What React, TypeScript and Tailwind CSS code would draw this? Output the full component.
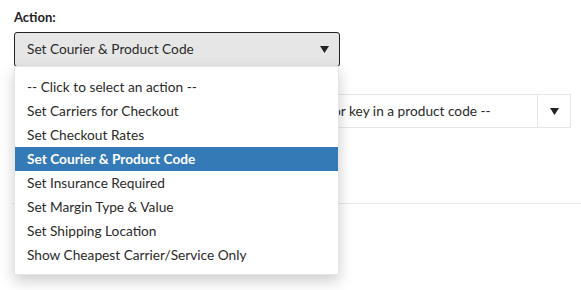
const actions = [
  '-- Click to select an action --',
  'Set Carriers for Checkout',
  'Set Checkout Rates',
  'Set Courier & Product Code',
  'Set Insurance Required',
  'Set Margin Type & Value',
  'Set Shipping Location',
  'Show Cheapest Carrier/Service Only',
]

function Caret() {
  return (
    <svg width="9" height="7" viewBox="0 0 9 7" className="fill-[#222]">
      <path d="M0 0h9L4.5 7z" />
    </svg>
  )
}

export default function App() {
  const selected = 'Set Courier & Product Code'

  return (
    <div className="relative min-h-[290px] bg-white text-[13.7px] text-[#2a2a2a] font-['Lato','Liberation_Sans',sans-serif]">
      <div className="pl-[14px] pt-[9px]">
        {/* Action */}
        <label className="block text-[13px] font-bold text-[#222] leading-[16px]">Action:</label>
        <div className="mt-[7px] w-[326px] h-[35px] rounded-[3px] border border-[#222] bg-[#e6e6e6] flex items-center justify-between pl-[12px] pr-[10px]">
          <span>{selected}</span>
          <Caret />
        </div>

        {/* Value */}
        <label className="block mt-[5px] text-[13px] font-bold text-[#222] leading-[16px]">Value:</label>
        <div className="mt-[6px] w-[557px] h-[34px] border border-[#e5e7eb] flex items-stretch">
          <div className="flex-1 flex items-center pl-[12px] whitespace-nowrap overflow-hidden">
            -- Select a carrier &amp; service from the dropdown list or key in a product code --
          </div>
          <div className="w-[33px] border-l border-[#e5e7eb] flex items-center justify-center">
            <Caret />
          </div>
        </div>

        <button className="mt-[31px] h-[30px] w-[90px] rounded-[3px] bg-[#f0a30a] text-white font-bold">
          Save
        </button>
      </div>
      <div className="mt-[14px] ml-[12px] border-t border-[#e8e8e8]" />

      {/* Open dropdown menu */}
      <ul className="absolute left-[14px] top-[66px] w-[325px] bg-white pt-[8px] pb-[7px] shadow-[0_6px_14px_rgba(0,0,0,0.2)] border border-[#e5e5e5]">
        {actions.map((a) => (
          <li
            key={a}
            className={
              a === selected
                ? 'h-[24px] flex items-center pl-[12px] bg-[#337ab7] text-white font-bold'
                : 'h-[24px] flex items-center pl-[12px]'
            }
          >
            {a}
          </li>
        ))}
      </ul>
    </div>
  )
}
